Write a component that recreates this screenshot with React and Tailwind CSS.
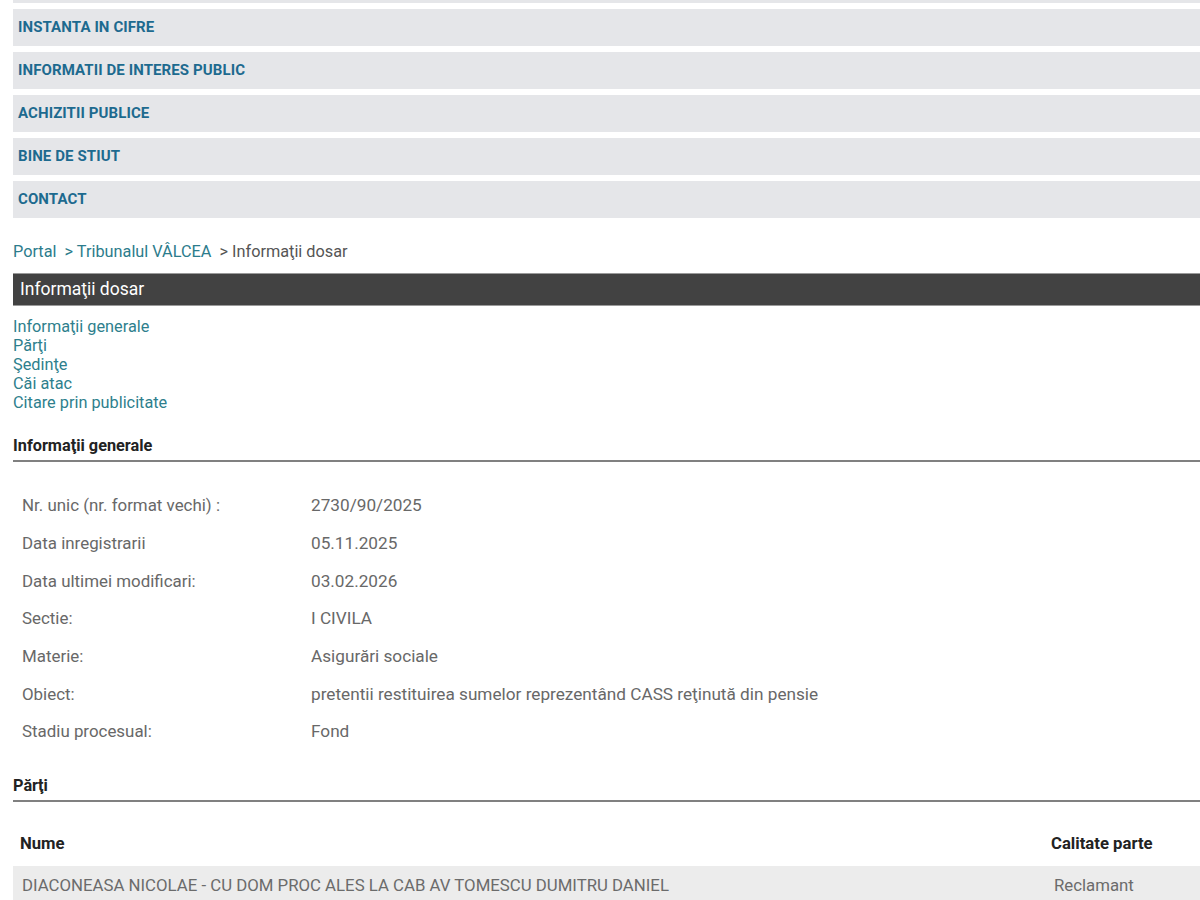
export default function App() {
  const nav = [
    "INSTANTA IN CIFRE",
    "INFORMATII DE INTERES PUBLIC",
    "ACHIZITII PUBLICE",
    "BINE DE STIUT",
    "CONTACT",
  ];
  const rows = [
    ["Nr. unic (nr. format vechi) :", "2730/90/2025"],
    ["Data inregistrarii", "05.11.2025"],
    ["Data ultimei modificari:", "03.02.2026"],
    ["Sectie:", "I CIVILA"],
    ["Materie:", "Asigurări sociale"],
    ["Obiect:", "pretentii restituirea sumelor reprezentând CASS reţinută din pensie"],
    ["Stadiu procesual:", "Fond"],
  ];
  const links = ["Informaţii generale", "Părţi", "Şedinţe", "Căi atac", "Citare prin publicitate"];
  return (
    <div className="w-[1200px] h-[900px] overflow-hidden bg-white pl-[13px]" style={{ fontFamily: "Roboto, 'Liberation Sans', sans-serif" }}>
      <div className="flex flex-col gap-[6.5px]">
        <div className="h-[2.7px] bg-[#e5e6e9]" />
        {nav.map((n) => (
          <div key={n} className="h-[36.5px] bg-[#e5e6e9] flex items-center pl-[5px]">
            <span className="text-[15px] font-bold text-[#1d6a8f] tracking-[0.1px]">{n}</span>
          </div>
        ))}
      </div>
      <div className="mt-[24px] text-[16.3px] leading-[20px] text-[#555] whitespace-pre">
        <span className="text-[#2c7c8c]">Portal</span>
        <span className="text-[#2c7c8c]">{"  > Tribunalul VÂLCEA"}</span>
        <span>{"  > Informaţii dosar"}</span>
      </div>
      <div className="mt-[11.5px] h-[32.5px] bg-[#424242] border-y border-[#9a9a9a] flex items-center pl-[7px]">
        <span className="text-[17.5px] text-white">Informaţii dosar</span>
      </div>
      <div className="mt-[11.5px] flex flex-col text-[16.3px] leading-[19px] text-[#2e7f8d]">
        {links.map((l) => (
          <span key={l}>{l}</span>
        ))}
      </div>
      <div className="mt-[24px] text-[16.3px] font-bold text-[#222] leading-[20px]">Informaţii generale</div>
      <div className="mt-[4px] h-[2px] bg-[#808080]" />
      <div className="mt-[25px] flex flex-col text-[16.9px] text-[#686868]">
        {rows.map(([k, v]) => (
          <div key={k} className="h-[37.7px] flex items-center pl-[9px]">
            <span className="w-[289px] shrink-0">{k}</span>
            <span className="text-[17.2px]">{v}</span>
          </div>
        ))}
      </div>
      <div className="mt-[25px] text-[16.3px] font-bold text-[#222] leading-[20px]">Părţi</div>
      <div className="mt-[4px] h-[2px] bg-[#808080]" />
      <div className="mt-[31px] h-[22px] flex items-center text-[16.7px] font-bold text-[#222]">
        <span className="pl-[7px] flex-1">Nume</span>
        <span className="w-[149px]">Calitate parte</span>
      </div>
      <div className="mt-[11px] h-[40px] bg-[#ececec] flex items-start pt-[7px] text-[16.8px] text-[#6b6b6b]">
        <span className="pl-[9px] flex-1">DIACONEASA NICOLAE - CU DOM PROC ALES LA CAB AV TOMESCU DUMITRU DANIEL</span>
        <span className="w-[146px]">Reclamant</span>
      </div>
    </div>
  );
}
